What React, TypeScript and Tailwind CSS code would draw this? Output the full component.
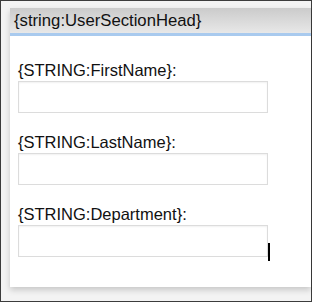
const fields = ["{STRING:FirstName}:", "{STRING:LastName}:", "{STRING:Department}:"];

export default function App() {
  return (
    <div className="w-[312px] h-[302px] border border-[#3c3c3c] bg-[#f3f3f3] pt-[7px] pl-[9px] font-['Liberation_Sans',Arial,sans-serif] text-[#111]">
      <div className="w-[301px] h-[279px] bg-white shadow-[0_3px_6px_rgba(0,0,0,0.18)]">
        <div className="h-[25px] bg-gradient-to-b from-[#cbcbcb] to-[#e8e8e8] border-b-[3px] border-[#a9caee] box-content pl-[4px] text-[16.7px] leading-[25px]">
          {"{string:UserSectionHead}"}
        </div>
        <div className="pl-[8px] pt-[23px] flex flex-col gap-[18px]">
          {fields.map((f, i) => (
            <div key={f} className="flex flex-col">
              <div className="text-[16.5px] leading-[22px]">{f}</div>
              <div className="relative w-[250px] h-[32px] border border-[#dcdcdc] shadow-[inset_0_1px_2px_rgba(0,0,0,0.06)]">
                {i === 2 && (
                  <div className="absolute left-[249px] top-[17px] w-[2px] h-[18px] bg-black" />
                )}
              </div>
            </div>
          ))}
        </div>
      </div>
    </div>
  );
}
